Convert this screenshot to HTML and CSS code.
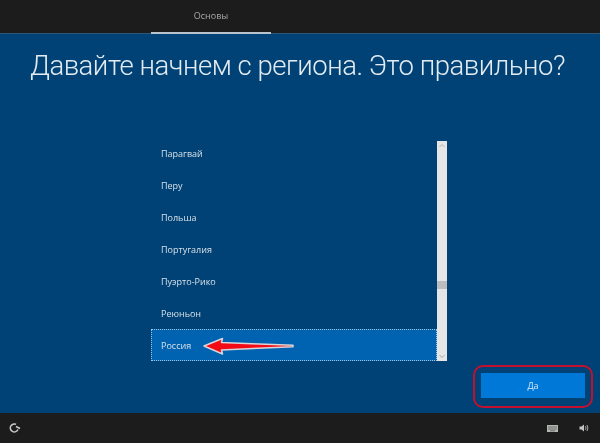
FILE: index.html
```html
<!DOCTYPE html>
<html lang="ru">
<head>
    <meta charset="UTF-8">
    <title>Основы</title>
    <link rel="stylesheet" href="styles.css">
</head>
<body>
    <div class="topbar">
        <div class="tab">Основы</div>
    </div>
    <main class="main">
        <h1>Давайте начнем с региона. Это правильно?</h1>
        <div class="region-box">
            <ul class="list">
                <li>Парагвай</li>
                <li>Перу</li>
                <li>Польша</li>
                <li>Португалия</li>
                <li>Пуэрто-Рико</li>
                <li>Реюньон</li>
                <li class="selected">Россия</li>
            </ul>
            <div class="scrollbar">
                <svg class="chevron" width="10" height="10" viewBox="0 0 10 10"><path d="M2.5 6 5 3.5 7.5 6" fill="none" stroke="#b8b0a8" stroke-width="1"/></svg>
                <div class="thumb"></div>
                <svg class="chevron" width="10" height="10" viewBox="0 0 10 10"><path d="M2.5 4 5 6.5 7.5 4" fill="none" stroke="#a8a8a8" stroke-width="1"/></svg>
            </div>
            <svg class="arrow" width="94" height="20" viewBox="0 0 94 20">
                <path d="M2 10 L20.5 2.5 L19.5 6.5 L91 9.3 L91 10.7 L19.5 14 L20.5 18 Z" fill="#f40a14" stroke="#d8d4d8" stroke-width="1.5" stroke-linejoin="round"/>
            </svg>
        </div>
        <div class="actions">
            <div class="btn-ring"><button class="btn">Да</button></div>
        </div>
    </main>
    <div class="bottombar">
        <svg class="icon" width="12" height="11" viewBox="0 0 12 11"><path d="M7 1.3A4 4 0 1 0 9 6.5" fill="none" stroke="#c8c8c8" stroke-width="1.5"/><path d="M7 3.5 11 5.5" fill="none" stroke="#c8c8c8" stroke-width="1.5"/></svg>
        <div class="tray">
            <svg class="icon" width="11" height="7" viewBox="0 0 11 7"><rect width="11" height="7" fill="#b4b8b4"/><path d="M1 2h9M1 4h9M3 5.8h5" stroke="#5a5a5a" stroke-width="0.8"/></svg>
            <svg class="icon" width="10" height="8" viewBox="0 0 10 8"><path d="M0.5 2.5H2.5L5 0.5V7.5L2.5 5.5H0.5Z" fill="#c4c4c4"/><path d="M6.5 2.2Q7.5 4 6.5 5.8M8 1Q9.8 4 8 7" fill="none" stroke="#a8a8a8" stroke-width="1"/></svg>
        </div>
    </div>
</body>
</html>
```

FILE: styles.css
```css
html, body {
    margin: 0;
    padding: 0;
}
html {
    background-color: #1c1c1c;
}
body {
    width: 600px;
    height: 443px;
    display: flex;
    flex-direction: column;
    overflow: hidden;
    background-color: #004275;
    font-family: "Open Sans", "Liberation Sans", sans-serif;
    color: #fff;
    filter: blur(0.4px);
}
.topbar {
    height: 34px;
    flex: none;
    box-sizing: border-box;
    padding-left: 151px;
    background-color: #1c1c1c;
    border-bottom: 1px solid #2d5576;
}
.tab {
    width: 120px;
    height: 34px;
    box-sizing: border-box;
    padding-top: 9px;
    border-bottom: 2px solid #b9c4cc;
    font-size: 9px;
    line-height: 13px;
    text-align: center;
    color: #a9a9a9;
}
.main {
    flex: 1;
    display: flex;
    flex-direction: column;
}
h1 {
    margin: 13px 0 0;
    padding-right: 5px;
    font-family: Roboto, "Open Sans", sans-serif;
    font-size: 27.5px;
    font-weight: 300;
    letter-spacing: -0.46px;
    line-height: 38px;
    text-align: center;
    color: #e3ebf1;
}
.region-box {
    position: relative;
    display: flex;
    width: 296px;
    height: 220px;
    margin: 56px 0 0 151px;
}
.list {
    width: 286px;
    margin: 0;
    padding: 0;
    list-style: none;
    font-size: 9px;
}
.list li {
    height: 32px;
    box-sizing: border-box;
    padding: 0 10px;
    line-height: 25px;
    color: #d5e0e9;
}
.list li.selected {
    height: 32px;
    margin-top: -4px;
    border: 1px dotted #a6c4dc;
    padding: 0 9px;
    line-height: 31px;
    background-color: #0063b1;
}
.scrollbar {
    width: 10px;
    display: flex;
    flex-direction: column;
    align-items: center;
    justify-content: space-between;
    position: relative;
    background-color: #e6e6e6;
}
.thumb {
    position: absolute;
    top: 140px;
    left: 0;
    width: 10px;
    height: 8px;
    background-color: #bdbdbd;
}
.arrow {
    position: absolute;
    left: 51px;
    top: 195px;
}
.actions {
    display: flex;
    justify-content: flex-end;
    margin-top: 4px;
    padding-right: 7px;
}
.btn-ring {
    padding: 6px 6px 8px;
    border: 2px solid #c2102e;
    border-radius: 10px;
}
.btn {
    display: block;
    width: 104px;
    height: 25px;
    padding: 0;
    border: none;
    background-color: #0078d7;
    font-family: inherit;
    font-size: 9px;
    color: #d8e8f4;
}
.bottombar {
    height: 30px;
    flex: none;
    display: flex;
    align-items: center;
    justify-content: space-between;
    padding: 0 11px 0 9px;
    background-color: #1c1c1c;
}
.tray {
    display: flex;
    align-items: center;
    gap: 21px;
}
.icon {
    display: block;
}
```
